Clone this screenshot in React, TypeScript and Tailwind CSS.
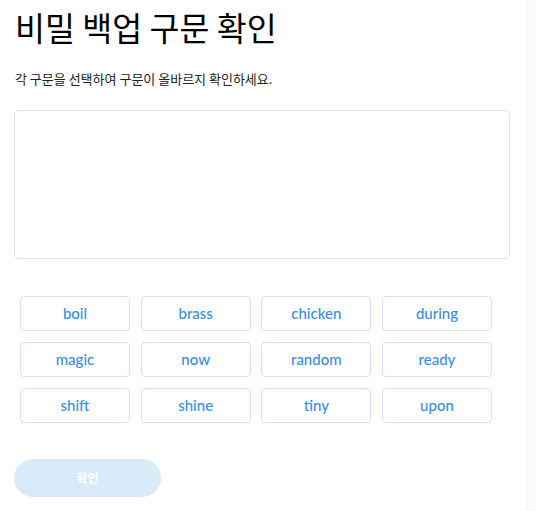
import React from "react";

const words = [
  "boil", "brass", "chicken", "during",
  "magic", "now", "random", "ready",
  "shift", "shine", "tiny", "upon",
];

export default function App() {
  return (
    <div className="flex w-[536px] h-[511px] bg-white overflow-hidden">
      <div className="w-[525px] pl-[14px] pr-[15px] font-['Noto_Sans_CJK_KR',sans-serif]">
        <h1 className="mt-[7px] pl-[1px] text-[32.6px] leading-[40px] font-normal text-black">
          비밀 백업 구문 확인
        </h1>
        <p className="mt-[22px] pl-[1px] text-[13px] leading-[20px] text-[#222]">
          각 구문을 선택하여 구문이 올바르지 확인하세요.
        </p>
        <div className="mt-[21px] h-[149px] w-[496px] rounded-[5px] border-[1.5px] border-[#e2e2e2] bg-white" />
        <div className="mt-[37px] ml-[6px] grid grid-cols-[repeat(4,110px)] gap-x-[10.67px] gap-y-[11px]">
          {words.map((w) => (
            <button
              key={w}
              className="h-[35px] rounded-[4px] border-[1.5px] border-[#cfe4f8] bg-white text-[15px] font-medium text-[#3a8ee2] font-['Lato',sans-serif]"
            >
              {w}
            </button>
          ))}
        </div>
        <button className="mt-[36px] h-[38px] w-[147px] rounded-full bg-[#d9eaf9] text-[12px] font-bold text-white">
          확인
        </button>
      </div>
      <div className="w-[11px] h-full bg-[#fafafa]" />
    </div>
  );
}
